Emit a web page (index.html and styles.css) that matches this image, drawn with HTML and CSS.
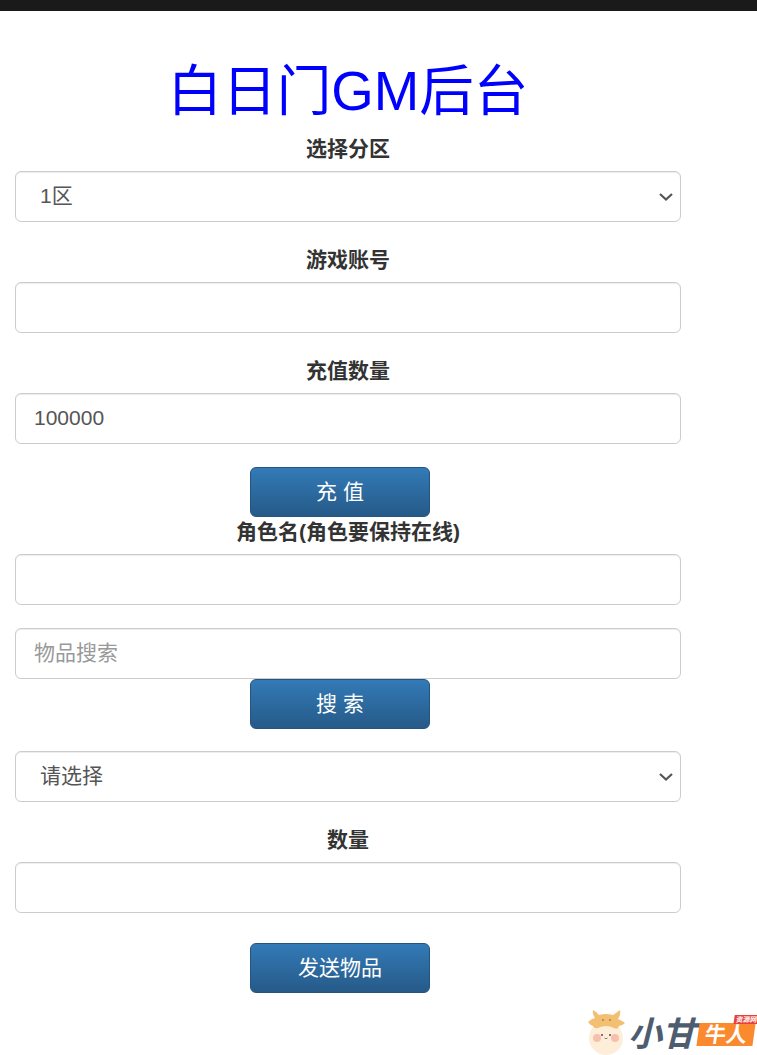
FILE: index.html
```html
<!DOCTYPE html>
<html lang="zh-CN">
<head>
    <meta charset="UTF-8">
    <meta name="viewport" content="width=device-width, initial-scale=1.0">
    <title>白日门GM后台</title>
    <link rel="stylesheet" href="styles.css">
</head>
<body>
    <div class="topbar"></div>
    <div class="container">
        <h1>白日门GM后台</h1>

        <div class="form-group">
            <label>选择分区</label>
            <select class="form-control"><option>1区</option></select>
        </div>
        <div class="form-group">
            <label>游戏账号</label>
            <input class="form-control" type="text">
        </div>
        <div class="form-group">
            <label>充值数量</label>
            <input class="form-control" type="text" value="100000">
        </div>
        <div class="btn-row row-recharge"><button class="btn">充 值</button></div>

        <div class="form-group group-role">
            <label>角色名(角色要保持在线)</label>
            <input class="form-control" type="text">
        </div>
        <input class="form-control" type="text" placeholder="物品搜索">
        <div class="btn-row row-search"><button class="btn">搜 索</button></div>

        <div class="form-group">
            <select class="form-control"><option>请选择</option></select>
        </div>
        <div class="form-group">
            <label>数量</label>
            <input class="form-control" type="text">
        </div>
        <div class="btn-row row-send"><button class="btn">发送物品</button></div>
    </div>

    <!-- watermark -->
    <div class="watermark">
        <svg class="mascot" width="40" height="46" viewBox="0 0 40 46">
            <circle cx="18" cy="29" r="17" fill="#fdeeda"/>
            <path d="M7 9 Q4 5 5 1 Q9 3 11 6 Q18 4 25 6 Q28 4 32 1 Q33 6 30 10 Q35 12 37 14 Q34 17 31 17 Q30 21 26 19 Q18 15 10 19 Q6 20 5 17 Q2 16 0 13 Q3 10 7 9Z" fill="#f3bf72"/>
            <path d="M14 11 h2 M21 11 h2" stroke="#b98038" stroke-width="1.5"/>
            <circle cx="9" cy="29" r="4" fill="#f8bfae"/>
            <circle cx="27" cy="29" r="4" fill="#f8bfae"/>
            <circle cx="14" cy="26" r="1" fill="#5a4a3a"/>
            <circle cx="22" cy="26" r="1" fill="#5a4a3a"/>
            <path d="M16.5 29 q1.5 1.5 3 0" fill="none" stroke="#5a4a3a" stroke-width=".7"/>
        </svg>
        <span class="wm-name">小甘</span>
        <span class="wm-badge">牛人<span class="wm-tag">资源网</span></span>
    </div>
</body>
</html>
```

FILE: styles.css
```css
* {
    box-sizing: border-box;
}
body {
    margin: 0;
    font-family: "Liberation Sans", "Noto Sans CJK SC", sans-serif;
    font-size: 14px;
    color: #333;
    background-color: #fff;
}
.topbar {
    height: 11px;
    background-color: #1a1a1a;
}
.container {
    width: 666px;
    height: 1044px;
    margin-left: 15px;
}
h1 {
    height: 127px;
    margin: 0;
    padding-top: 47px;
    font-size: 54.6px;
    line-height: 68px;
    font-weight: 400;
    color: #0000ff;
    text-align: center;
}
label {
    display: block;
    height: 22px;
    margin-bottom: 11px;
    font-size: 21px;
    line-height: 22px;
    font-weight: 700;
    text-align: center;
}
.form-group {
    margin-bottom: 27px;
}
.form-control {
    display: block;
    width: 100%;
    height: 51px;
    padding: 8px 18px 10px;
    font-family: inherit;
    font-size: 21px;
    color: #555;
    background-color: #fff;
    border: 1px solid #ccc;
    border-radius: 6px;
    box-shadow: inset 0 1px 1px rgba(0, 0, 0, .075);
}
.form-control::placeholder {
    color: #999;
}
select.form-control {
    appearance: none;
    padding-left: 24px;
    background-image: url("data:image/svg+xml,%3Csvg xmlns='http://www.w3.org/2000/svg' width='14' height='8'%3E%3Cpath d='M1 1 L7 6.5 L13 1' fill='none' stroke='%23555' stroke-width='2.2'/%3E%3C/svg%3E");
    background-repeat: no-repeat;
    background-position: right 7px center;
}
.btn-row {
    height: 50px;
    padding-left: 235px;
}
.btn {
    display: block;
    width: 180px;
    height: 50px;
    padding: 0 0 4px;
    font-family: inherit;
    font-size: 21px;
    color: #fff;
    background-image: linear-gradient(to bottom, #337ab7 0, #265a88 100%);
    border: 1px solid #245580;
    border-radius: 6px;
}
.row-recharge {
    margin-top: -4px;
}
.group-role {
    margin-top: 4px;
    margin-bottom: 23px;
}
.row-search {
    margin-bottom: 22px;
}
.row-send {
    margin-top: 30px;
}
.watermark {
    position: absolute;
    left: 588px;
    top: 1009px;
    display: flex;
    align-items: center;
    height: 46px;
}
.mascot {
    flex: none;
}
.wm-name {
    width: 70px;
    margin-top: 4px;
    font-size: 34px;
    line-height: 38px;
    font-weight: 700;
    font-style: italic;
    color: #4d5d70;
}
.wm-badge {
    position: relative;
    width: 56px;
    height: 23px;
    margin-top: 4px;
    font-size: 21px;
    line-height: 23px;
    font-weight: 700;
    text-align: center;
    color: #fff;
    background-color: #fb8a2e;
    transform: skewX(-8deg);
}
.wm-tag {
    position: absolute;
    right: -3px;
    top: -8px;
    padding: 0 2px;
    font-size: 7px;
    line-height: 9px;
    background-color: #e8403a;
}
```
